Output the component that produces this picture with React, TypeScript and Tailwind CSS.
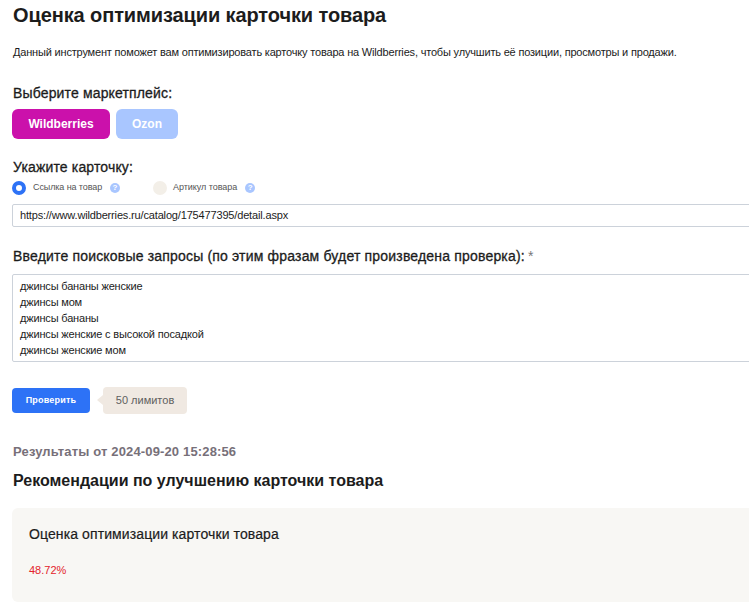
const font = { fontFamily: '"Liberation Sans", Arial, sans-serif' };

function Hint() {
  return (
    <span className="flex h-[10px] w-[10px] items-center justify-center rounded-full bg-[#a9c6ff] text-[8px] font-bold leading-none text-white">
      ?
    </span>
  );
}

export default function App() {
  return (
    <div
      style={font}
      className="h-[606px] w-[749px] overflow-hidden bg-white pl-3 text-[#1c1c1c]"
    >
      <h1 className="pt-[3px] pl-px text-[20px] font-bold leading-[24px] tracking-[-0.1px]">
        Оценка оптимизации карточки товара
      </h1>
      <p className="mt-[17px] whitespace-nowrap pl-px text-[11px] leading-[16px] tracking-[-0.18px]">
        Данный инструмент поможет вам оптимизировать карточку товара на Wildberries, чтобы улучшить её позиции, просмотры и продажи.
      </p>

      <h2 className="mt-[24px] pl-px text-[14px] font-normal leading-[18px] tracking-[0.15px] [-webkit-text-stroke:0.3px]">
        Выберите маркетплейс:
      </h2>
      <div className="mt-[7px] flex gap-[6px]">
        <div className="flex h-[30px] w-[98px] items-center justify-center rounded-[6px] bg-[#cb11ab] text-[12px] font-bold text-white">
          Wildberries
        </div>
        <div className="flex h-[30px] w-[62px] items-center justify-center rounded-[6px] bg-[#a9c6ff] text-[12px] font-bold text-white">
          Ozon
        </div>
      </div>

      <h2 className="mt-[19px] pl-px text-[14px] leading-[18px] tracking-[0.15px] [-webkit-text-stroke:0.3px]">
        Укажите карточку:
      </h2>
      <div className="mt-[5px] flex h-[14px] items-center">
        <span className="h-[14px] w-[14px] rounded-full border-[4px] border-[#2d72f6] bg-white" />
        <span className="ml-[7px] text-[9px] tracking-[-0.1px] text-[#555]">Ссылка на товар</span>
        <span className="ml-[8px]"><Hint /></span>
        <span className="ml-[33px] h-[14px] w-[14px] rounded-full bg-[#f3efe8]" />
        <span className="ml-[6px] text-[9px] tracking-[-0.05px] text-[#555]">Артикул товара</span>
        <span className="ml-[8px]"><Hint /></span>
      </div>
      <div className="mt-[9px] flex h-[23px] w-[760px] items-center rounded-[2px] border border-[#ccd2da] pl-[7px] text-[11px] tracking-[-0.16px]">
        https://www.wildberries.ru/catalog/175477395/detail.aspx
      </div>

      <div className="mt-[20px] pl-px text-[14px] leading-[18px] tracking-[0.18px] [-webkit-text-stroke:0.3px]">
        Введите поисковые запросы (по этим фразам будет произведена проверка):{' '}
        <span className="ml-[-1px] font-normal text-[#777] [-webkit-text-stroke:0px]">*</span>
      </div>
      <div className="mt-[9px] h-[88px] w-[760px] rounded-[2px] border border-[#ccd2da] pl-[7px] pt-[3px] text-[11px] leading-[16px] tracking-[-0.17px]">
        <div>джинсы бананы женские</div>
        <div>джинсы мом</div>
        <div>джинсы бананы</div>
        <div>джинсы женские с высокой посадкой</div>
        <div>джинсы женские мом</div>
      </div>

      <div className="mt-[25px] flex items-center">
        <div className="flex h-[25px] w-[78px] items-center justify-center rounded-[4px] bg-[#2d72f6] text-[9px] font-bold tracking-[0.2px] text-white">
          Проверить
        </div>
        <div className="relative ml-[13px] flex h-[27px] w-[84px] items-center justify-center rounded-[4px] bg-[#f0e9e2] text-[11px] text-[#5f5f5f]">
          <span className="absolute left-[-6px] top-[8px] h-0 w-0 border-y-[5px] border-r-[6px] border-y-transparent border-r-[#f0e9e2]" />
          50 лимитов
        </div>
      </div>

      <div className="mt-[29px] pl-px text-[13px] font-bold leading-[18px] tracking-[0.15px] text-[#777079]">
        Результаты от 2024-09-20 15:28:56
      </div>
      <h2 className="mt-[10px] pl-px text-[16px] font-bold leading-[20px]">
        Рекомендации по улучшению карточки товара
      </h2>
      <div className="mt-[17px] h-[94px] w-[760px] rounded-[6px] bg-[#f8f7f4] pl-4 pt-[18px]">
        <div className="pl-px text-[14px] leading-[16px] tracking-[0.1px] [-webkit-text-stroke:0.2px]">
          Оценка оптимизации карточки товара
        </div>
        <div className="mt-[20px] pl-px text-[11px] leading-[16px] text-[#e3242b]">48.72%</div>
      </div>
    </div>
  );
}
